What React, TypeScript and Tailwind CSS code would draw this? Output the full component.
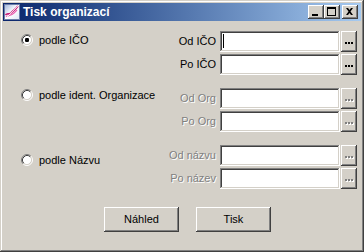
import React from 'react';

const raised =
  'shadow-[inset_-1px_-1px_#404040,inset_1px_1px_#ffffff,inset_-2px_-2px_#808080,inset_2px_2px_#d4d0c8]';
const sunken =
  'shadow-[inset_-1px_-1px_#ffffff,inset_1px_1px_#808080,inset_-2px_-2px_#d4d0c8,inset_2px_2px_#404040]';

function Radio({ checked }: { checked?: boolean }) {
  // classic 12x12 radio button
  return (
    <svg width="12" height="12" viewBox="0 0 12 12" className="shrink-0">
      <circle cx="6" cy="6" r="4.5" fill="#ffffff" />
      <path d="M2.11 9.89 A5.5 5.5 0 0 1 9.89 2.11" fill="none" stroke="#808080" strokeWidth="1" />
      <path d="M9.89 2.11 A5.5 5.5 0 0 1 2.11 9.89" fill="none" stroke="#ffffff" strokeWidth="1" />
      <path d="M2.82 9.18 A4.5 4.5 0 0 1 9.18 2.82" fill="none" stroke="#404040" strokeWidth="1" />
      <path d="M9.18 2.82 A4.5 4.5 0 0 1 2.82 9.18" fill="none" stroke="#d4d0c8" strokeWidth="1" />
      {checked && <rect x="4" y="4" width="4" height="4" rx="1.2" fill="#000000" />}
    </svg>
  );
}

function Dots({ disabled }: { disabled?: boolean }) {
  const dot = disabled
    ? 'w-[2px] h-[2px] bg-[#808080] shadow-[1px_1px_0_#ffffff]'
    : 'w-[2px] h-[2px] bg-black';
  return (
    <div className="flex gap-[1px] mt-[3px]">
      <div className={dot} />
      <div className={dot} />
      <div className={dot} />
    </div>
  );
}

function FieldRow({
  label,
  disabled,
  caret,
}: {
  label: string;
  disabled?: boolean;
  caret?: boolean;
}) {
  return (
    <div className="flex items-center h-[21px]">
      <div
        className={
          'w-[60px] pr-[4px] text-right whitespace-nowrap ' +
          (disabled ? 'text-[#808080] [text-shadow:1px_1px_0_#ffffff]' : 'text-black')
        }
      >
        {label}
      </div>
      <div className={'relative w-[120px] h-[21px] bg-white ' + sunken}>
        {caret && <div className="absolute left-[3px] top-[3px] w-[1px] h-[14px] bg-black" />}
      </div>
      <div
        className={
          'ml-[1px] w-[16px] h-[21px] bg-[#d4d0c8] flex items-center justify-center ' + raised
        }
      >
        <Dots disabled={disabled} />
      </div>
    </div>
  );
}

function TitleIcon() {
  return (
    <svg width="16" height="16" viewBox="0 0 16 16" className="shrink-0">
      <defs>
        <linearGradient id="ic" x1="0" y1="0" x2="1" y2="1">
          <stop offset="0" stopColor="#9fb4dc" />
          <stop offset="0.5" stopColor="#ffffff" />
          <stop offset="1" stopColor="#dce4f4" />
        </linearGradient>
      </defs>
      <rect x="0.5" y="0.5" width="15" height="15" fill="url(#ic)" stroke="#6c7ea8" />
      <path d="M1.5 11 C4 8 5 12 8 8 C10 6 12 5 14 2" fill="none" stroke="#c8207a" strokeWidth="1.8" />
      <path d="M2 13 C5 11 7 12 10 9 C11 8 12 7 13 6" fill="none" stroke="#e860b0" strokeWidth="1.2" />
      <path d="M1 15 L15 1" fill="none" stroke="#ffffff" strokeWidth="0.8" />
    </svg>
  );
}

function CaptionButton({ kind }: { kind: 'min' | 'max' | 'close' }) {
  return (
    <div className={'w-[16px] h-[14px] bg-[#d4d0c8] flex items-center justify-center ' + raised}>
      <svg width="16" height="14" viewBox="0 0 16 14">
        {kind === 'min' && <rect x="4" y="9" width="6" height="2" fill="#000" />}
        {kind === 'max' && (
          <>
            <rect x="3.5" y="2.5" width="8" height="8" fill="none" stroke="#000" />
            <rect x="3" y="2" width="9" height="2" fill="#000" />
          </>
        )}
        {kind === 'close' && (
          <path
            d="M4 3 L6 3 L7.5 5 L9 3 L11 3 L8.5 6.5 L11 10 L9 10 L7.5 8 L6 10 L4 10 L6.5 6.5 Z"
            fill="#000"
          />
        )}
      </svg>
    </div>
  );
}

export default function App() {
  return (
    <div
      className="w-[364px] h-[252px] bg-[#d4d0c8] p-[3px] flex flex-col text-[11px] leading-none text-black shadow-[inset_-1px_-1px_#404040,inset_1px_1px_#d4d0c8,inset_-2px_-2px_#808080,inset_2px_2px_#ffffff]"
      style={{ fontFamily: '"Liberation Sans", Arial, sans-serif' }}
    >
      {/* Title bar */}
      <div className="h-[18px] flex items-center bg-linear-to-r from-[#0a246a] to-[#a6caf0] pl-[1px] pr-[3px]">
        <TitleIcon />
        <div className="ml-[3px] text-white font-bold text-[12px] flex-1">Tisk organizací</div>
        <CaptionButton kind="min" />
        <CaptionButton kind="max" />
        <div className="ml-[2px]">
          <CaptionButton kind="close" />
        </div>
      </div>

      {/* Body */}
      <div className="flex">
        <div className="flex-1 flex flex-col pl-[18px]">
          <div className="mt-[13px] flex items-center gap-[6px] h-[12px]">
            <Radio checked />
            <span>podle IČO</span>
          </div>
          <div className="mt-[43px] flex items-center gap-[6px] h-[12px]">
            <Radio />
            <span>podle ident. Organizace</span>
          </div>
          <div className="mt-[53px] flex items-center gap-[6px] h-[12px]">
            <Radio />
            <span>podle Názvu</span>
          </div>
        </div>
        <div className="flex flex-col pt-[10px] pr-[4px]">
          <FieldRow label="Od IČO" caret />
          <div className="mt-[2px]">
            <FieldRow label="Po IČO" />
          </div>
          <div className="mt-[13px]">
            <FieldRow label="Od Org" disabled />
          </div>
          <div className="mt-[2px]">
            <FieldRow label="Po Org" disabled />
          </div>
          <div className="mt-[13px]">
            <FieldRow label="Od názvu" disabled />
          </div>
          <div className="mt-[2px]">
            <FieldRow label="Po název" disabled />
          </div>
        </div>
      </div>

      {/* Buttons */}
      <div className="flex pl-[101px] gap-[17px] mt-[18px]">
        <div className={'w-[75px] h-[25px] flex items-center justify-center ' + raised}>Náhled</div>
        <div className={'w-[75px] h-[25px] flex items-center justify-center ' + raised}>Tisk</div>
      </div>
    </div>
  );
}
